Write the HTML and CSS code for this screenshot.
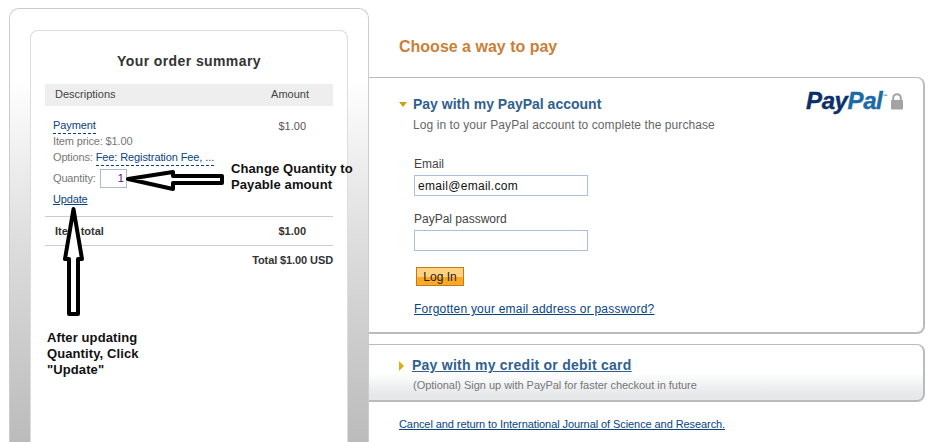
FILE: index.html
```html
<!DOCTYPE html>
<html lang="en">
<head>
    <meta charset="UTF-8">
    <title>Choose a way to pay</title>
    <link rel="stylesheet" href="styles.css">
</head>
<body>
    <div class="page">
        <aside class="sidebar">
            <div class="summary">
                <h2 class="summary-title">Your order summary</h2>
                <div class="summary-head">
                    <span>Descriptions</span>
                    <span>Amount</span>
                </div>
                <div class="item">
                    <div class="item-info">
                        <a class="dotted-link" href="#">Payment</a>
                        <div class="muted">Item price: $1.00</div>
                        <div class="muted">Options: <a class="dotted-link" href="#">Fee: Registration Fee, ...</a></div>
                        <div class="muted qty-row">Quantity: <span class="qty-box">1</span></div>
                        <a class="update-link" href="#">Update</a>
                    </div>
                    <div class="item-price">$1.00</div>
                </div>
                <div class="total-row">
                    <span>Item total</span>
                    <span>$1.00</span>
                </div>
                <div class="grand-total">Total $1.00 USD</div>
            </div>
        </aside>

        <main class="methods">
            <h1 class="methods-title">Choose a way to pay</h1>

            <section class="panel login-panel">
                <div class="brand">
                    <span class="brand-name"><span class="brand-pay">Pay</span><span class="brand-pal">Pal</span><sup class="brand-tm">™</sup></span>
                    <svg class="lock" width="14" height="17" viewBox="0 0 14 17">
                        <path d="M3.2 8V5a3.8 3.8 0 0 1 7.6 0v3" fill="none" stroke="#a3a3a3" stroke-width="2"/>
                        <rect x="1" y="7" width="12" height="9.5" rx="1" fill="#a3a3a3"/>
                    </svg>
                </div>
                <h3 class="panel-title"><span class="arrow-down"></span>Pay with my PayPal account</h3>
                <p class="panel-sub">Log in to your PayPal account to complete the purchase</p>

                <label class="field-label">Email</label>
                <input class="field" type="text" value="email@email.com">
                <label class="field-label second">PayPal password</label>
                <input class="field" type="password">

                <button class="login-button">Log In</button>
                <a class="forgot-link" href="#">Forgotten your email address or password?</a>
            </section>

            <section class="panel card-panel">
                <h3 class="panel-title"><span class="arrow-right"></span><a href="#">Pay with my credit or debit card</a></h3>
                <p class="panel-sub small">(Optional) Sign up with PayPal for faster checkout in future</p>
            </section>

            <a class="cancel-link" href="#">Cancel and return to International Journal of Science and Research.</a>
        </main>
    </div>

    <!-- hand drawn notes on top of the screenshot -->
    <svg class="arrows" width="937" height="442">
        <polygon points="128,179 173,172 173,176 222,176 222,183 173,183 173,189" fill="#fff" stroke="#000" stroke-width="4" stroke-linejoin="round"/>
        <polygon points="73.5,209 65,259 69,259 69,314 78,314 78,259 82,259" fill="#fff" stroke="#000" stroke-width="4" stroke-linejoin="round"/>
    </svg>
    <div class="note note-quantity">Change Quantity to<br>Payable amount</div>
    <div class="note note-update">After updating<br>Quantity, Click<br>"Update"</div>
</body>
</html>
```

FILE: styles.css
```css
* {
    box-sizing: border-box;
}

body {
    margin: 0;
    height: 442px;
    overflow: hidden;
    background-color: #fff;
    font-family: "Liberation Sans", Arial, sans-serif;
    font-size: 11px;
    position: relative;
}

a {
    color: #084482;
}

.page {
    display: flex;
    align-items: flex-start;
    padding: 8px 12px 0 9px;
}

/* left column */
.sidebar {
    width: 360px;
    height: 434px;
    flex-shrink: 0;
    padding: 21px 20px 0;
    border: 1px solid #ccc;
    border-bottom: none;
    border-radius: 10px 10px 0 0;
    background: linear-gradient(#fff 0, #fff 70px, #dcdcdc 240px, #bbb 434px);
}

.summary {
    height: 412px;
    padding: 0 14px;
    background-color: #fff;
    border: 1px solid #ddd;
    border-bottom: none;
    border-radius: 8px 8px 0 0;
}

.summary-title {
    margin: 0;
    padding-top: 22px;
    height: 53px;
    font-size: 14px;
    line-height: 17px;
    letter-spacing: 0.4px;
    text-align: center;
    color: #333;
}

.summary-head {
    display: flex;
    justify-content: space-between;
    height: 22px;
    padding: 0 24px 0 10px;
    line-height: 21px;
    background-color: #eee;
    color: #444;
}

.item {
    display: flex;
    justify-content: space-between;
    height: 111px;
    padding: 11px 27px 0 8px;
    border-bottom: 1px solid #ccc;
    color: #555;
}

.item-info {
    line-height: 16px;
    letter-spacing: -0.15px;
}

.item-price {
    padding-top: 1px;
    line-height: 16px;
}

.dotted-link {
    text-decoration: none;
    border-bottom: 1px dashed #084482;
    padding-bottom: 2px;
    letter-spacing: -0.1px;
}

.muted {
    color: #777;
}

.qty-row {
    display: flex;
    align-items: center;
    gap: 4px;
    height: 20px;
    margin-top: 3px;
}

.qty-box {
    width: 27px;
    height: 19px;
    padding-right: 2px;
    border: 1px solid #a9bcd0;
    line-height: 17px;
    text-align: right;
    color: #609;
}

.update-link {
    display: inline-block;
    margin-top: 3px;
}

.total-row {
    display: flex;
    justify-content: space-between;
    height: 29px;
    padding: 0 27px 0 10px;
    line-height: 28px;
    font-weight: bold;
    color: #333;
    border-bottom: 1px solid #ccc;
}

.grand-total {
    padding-top: 8px;
    text-align: right;
    font-weight: bold;
    letter-spacing: -0.1px;
    color: #333;
}

/* right column */
.methods {
    flex: 1;
    display: flex;
    flex-direction: column;
    align-items: flex-start;
}

.methods-title {
    margin: 0;
    padding: 29px 0 0 30px;
    height: 69px;
    font-size: 16px;
    line-height: 19px;
    color: #cb7f36;
}

.panel {
    width: 100%;
    border: 1px solid #bbb;
    border-left: none;
    border-right-width: 2px;
    border-bottom-width: 2px;
    border-radius: 0 8px 8px 0;
    color: #555;
}

.login-panel {
    position: relative;
    height: 257px;
    padding: 18px 0 0 45px;
}

.brand {
    position: absolute;
    top: 9px;
    right: 19px;
    display: flex;
    align-items: center;
    gap: 3px;
}

.brand-name {
    font-size: 24px;
    font-weight: bold;
    font-style: italic;
    letter-spacing: -0.4px;
    -webkit-text-stroke: 0.4px;
}

.brand-pay {
    color: #0b2f68;
}

.brand-pal {
    color: #1a6ba8;
}

.brand-tm {
    font-size: 5px;
    color: #1a6ba8;
    vertical-align: 11px;
    -webkit-text-stroke: 0;
}

.panel-title {
    margin: 0 0 0 -1px;
    font-size: 14px;
    line-height: 17px;
    color: #30608f;
    position: relative;
}

.panel-title a {
    color: #30608f;
}

.arrow-down {
    position: absolute;
    left: -14px;
    top: 6px;
    border: 4px solid transparent;
    border-top: 5px solid #c9a313;
    border-bottom: none;
}

.arrow-right {
    position: absolute;
    left: -13px;
    top: 4px;
    border: 5px solid transparent;
    border-left: 5px solid #d9b00f;
    border-right: none;
}

.panel-sub {
    margin: 5px 0 0 -1px;
    font-size: 12px;
    line-height: 15px;
    letter-spacing: 0.08px;
    color: #666;
}

.panel-sub.small {
    margin-top: 4px;
    font-size: 11px;
    letter-spacing: -0.03px;
    color: #777;
}

.field-label {
    display: block;
    margin-top: 24px;
    font-size: 12px;
    line-height: 14px;
    color: #444;
}

.field-label.second {
    margin-top: 16px;
}

.field {
    display: block;
    width: 174px;
    height: 21px;
    margin-top: 4px;
    margin-left: 0;
    padding: 0 3px;
    border: 1px solid #a9bfdc;
    font-family: inherit;
    font-size: 12px;
    letter-spacing: 0.3px;
    color: #111;
}

.login-button {
    display: block;
    width: 48px;
    height: 19px;
    margin: 16px 0 0 2px;
    padding: 0;
    border: 1px solid #bf7a1a;
    background: linear-gradient(#ffd27f 0, #ffd27f 55%, #ffa822 55%, #ffa822 100%);
    font-family: inherit;
    font-size: 12px;
    color: #222;
}

.forgot-link {
    display: inline-block;
    margin-top: 16px;
    font-size: 12px;
    line-height: 14px;
    letter-spacing: 0.22px;
}

.card-panel {
    height: 58px;
    margin-top: 10px;
    padding: 12px 0 0 44px;
    background: linear-gradient(#fff 0, #fff 50%, #e6e8ea 90%, #e6e8ea 100%);
}

.card-panel .panel-title {
    margin-left: -1px;
    letter-spacing: 0.25px;
}

.card-panel .panel-sub {
    margin-left: 0;
}

.cancel-link {
    margin: 15px 0 0 30px;
    font-size: 11px;
    line-height: 14px;
    letter-spacing: -0.08px;
}

/* notes and arrows drawn over the page */
.arrows {
    position: absolute;
    top: 0;
    left: 0;
}

.note {
    position: absolute;
    font-size: 13px;
    font-weight: bold;
    line-height: 16px;
    letter-spacing: 0.1px;
    color: #111;
}

.note-quantity {
    top: 161px;
    left: 231px;
}

.note-update {
    top: 330px;
    left: 47px;
}
```
